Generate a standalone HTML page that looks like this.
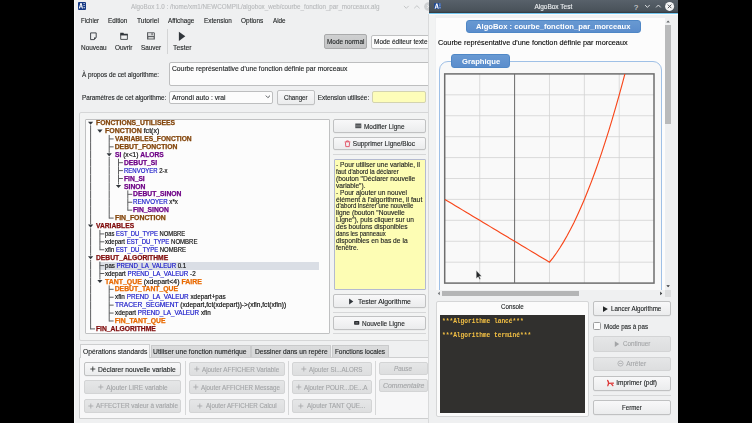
<!DOCTYPE html>
<html><head><meta charset="utf-8"><style>
html,body{margin:0;padding:0;width:752px;height:423px;overflow:hidden;background:#000;position:relative}
div{box-sizing:border-box}
</style></head><body>
<div style="position:absolute;left:74.00px;top:0.00px;width:355.00px;height:423.00px;z-index:0;background:#eff0f1"></div>
<div style="position:absolute;left:74.00px;top:0.00px;width:1.00px;height:423.00px;z-index:0;background:#f8f9f9"></div>
<div style="position:absolute;left:78.40px;top:2.20px;width:7.80px;height:7.80px;z-index:2;background:#163a86;border-radius:1px"><svg width="7.5" height="7.4" viewBox="0 0 75 74" style="position:absolute;left:0;top:0"><path d="M8 66 L24 10 L36 10 L50 66 L40 66 L36 52 L22 52 L18 66 Z M24 44 L34 44 L30 24 Z" fill="#fff"/><rect x="56" y="10" width="10" height="10" fill="#fff"/><rect x="56" y="30" width="10" height="10" fill="#fff"/><rect x="56" y="52" width="12" height="10" fill="#fff"/></svg></div>
<svg style="position:absolute;left:400px;top:2px;z-index:3" width="32" height="10"><path d="M3.9 3.9 L6.3 6.3 L8.7 3.9" stroke="#b9bbbd" fill="none" stroke-width="0.8"/><path d="M14.2 6.3 L16.9 3.7 L19.6 6.3" stroke="#b9bbbd" fill="none" stroke-width="0.8"/><circle cx="28.4" cy="4.5" r="4.3" fill="#cdcfd1"/><path d="M26.8 2.9 L30 6.1 M30 2.9 L26.8 6.1" stroke="#eff0f1" stroke-width="0.8"/></svg>
<svg style="position:absolute;left:85px;top:28px;z-index:3" width="110" height="16" viewBox="85 28 110 16">
<path d="M90.6 32.9 H96.2 V37.6 L94.1 39.6 H90.6 Z" fill="none" stroke="#31363b" stroke-width="0.9"/>
<path d="M94 39.6 L96.2 37.4 H94 Z" fill="#31363b"/>
<path d="M120.7 34.8 H127.4 V39.4 H120.7 Z" fill="none" stroke="#31363b" stroke-width="0.85"/>
<path d="M120.2 32.8 H123.4 L124 33.8 H127.8 V35.2 H120.2 Z" fill="#31363b"/>
<path d="M147 32.2 H154 L154.9 33.1 V39.6 H147 Z" fill="#5d6063"/>
<rect x="148.1" y="33.1" width="5.8" height="2.9" fill="#d8d9da"/>
<rect x="151.6" y="33.1" width="0.9" height="2.1" fill="#3a3d40"/>
<rect x="148.4" y="37.2" width="5.2" height="1.3" fill="#f0f0f0"/>
<path d="M178.9 31.7 L185.3 36.35 L178.9 41 Z" fill="#31363b"/>
</svg>
<div style="position:absolute;left:166.60px;top:28.60px;width:0.80px;height:25.30px;z-index:2;background:#d3d4d5"></div>
<div style="position:absolute;left:323.80px;top:34.20px;width:43.30px;height:14.80px;z-index:2;background:linear-gradient(#cfd0d1,#c3c4c5);border:1px solid #a9aaab;border-radius:2px"></div>
<div style="position:absolute;left:370.50px;top:34.50px;width:61.50px;height:14.20px;z-index:2;background:linear-gradient(#f8f8f9,#ebeced);border:1px solid #c0c1c2;border-radius:2px;box-shadow:0 0.6px 0 rgba(0,0,0,0.06);background:#fcfcfc"></div>
<div style="position:absolute;left:169.40px;top:62.30px;width:261.60px;height:24.00px;z-index:2;background:#fcfcfc;border:1px solid #bdbebf;border-radius:2px"></div>
<div style="position:absolute;left:169.40px;top:91.20px;width:103.80px;height:12.80px;z-index:2;background:#fcfcfc;border:1px solid #bdbebf;border-radius:2px"></div>
<svg style="position:absolute;left:264px;top:94px;z-index:3" width="8" height="6"><path d="M1.8 1.6 L3.9 3.7 L6 1.6" stroke="#31363b" fill="none" stroke-width="0.8"/></svg>
<div style="position:absolute;left:277.20px;top:90.40px;width:37.50px;height:14.20px;z-index:2;background:linear-gradient(#f8f8f9,#ebeced);border:1px solid #c0c1c2;border-radius:2px;box-shadow:0 0.6px 0 rgba(0,0,0,0.06);"></div>
<div style="position:absolute;left:372.40px;top:91.00px;width:53.30px;height:12.40px;z-index:2;background:#fdfdb9;border:1px solid #d3d3b0;border-radius:2px"></div>
<div style="position:absolute;left:79.40px;top:112.20px;width:351.60px;height:229.00px;z-index:1;border:1px solid #d5d6d7;border-radius:2px;background:#f2f3f3"></div>
<div style="position:absolute;left:85.40px;top:119.40px;width:244.70px;height:215.10px;z-index:2;background:#fcfcfc;border:1px solid #c0c1c2;border-radius:1px"></div>
<div style="position:absolute;left:99.20px;top:261.90px;width:219.60px;height:8.00px;z-index:3;background:#dadee5"></div>
<svg style="position:absolute;left:0;top:0;z-index:4" width="752" height="423"><rect x="90.10" y="125.30" width="1" height="1.76" fill="#5f6062"/><path d="M88.00 121.70 L93.20 121.70 L90.60 124.80 Z" fill="#31363b"/><path d="M97.30 129.61 L102.50 129.61 L99.90 132.71 Z" fill="#31363b"/><rect x="90.10" y="127.06" width="1" height="7.92" fill="#5f6062"/><rect x="108.70" y="134.97" width="1" height="7.92" fill="#5f6062"/><rect x="109.20" y="138.43" width="4.4" height="1" fill="#5f6062"/><rect x="90.10" y="134.97" width="1" height="7.92" fill="#5f6062"/><rect x="108.70" y="142.89" width="1" height="7.92" fill="#5f6062"/><rect x="109.20" y="146.34" width="4.4" height="1" fill="#5f6062"/><rect x="90.10" y="142.89" width="1" height="7.92" fill="#5f6062"/><rect x="108.70" y="150.80" width="1" height="1.96" fill="#5f6062"/><rect x="108.70" y="156.96" width="1" height="1.76" fill="#5f6062"/><path d="M106.60 153.36 L111.80 153.36 L109.20 156.46 Z" fill="#31363b"/><rect x="90.10" y="150.80" width="1" height="7.92" fill="#5f6062"/><rect x="118.00" y="158.72" width="1" height="7.92" fill="#5f6062"/><rect x="118.50" y="162.18" width="4.4" height="1" fill="#5f6062"/><rect x="90.10" y="158.72" width="1" height="7.92" fill="#5f6062"/><rect x="108.70" y="158.72" width="1" height="7.92" fill="#5f6062"/><rect x="118.00" y="166.63" width="1" height="7.92" fill="#5f6062"/><rect x="118.50" y="170.09" width="4.4" height="1" fill="#5f6062"/><rect x="90.10" y="166.63" width="1" height="7.92" fill="#5f6062"/><rect x="108.70" y="166.63" width="1" height="7.92" fill="#5f6062"/><rect x="118.00" y="174.55" width="1" height="7.92" fill="#5f6062"/><rect x="118.50" y="178.00" width="4.4" height="1" fill="#5f6062"/><rect x="90.10" y="174.55" width="1" height="7.92" fill="#5f6062"/><rect x="108.70" y="174.55" width="1" height="7.92" fill="#5f6062"/><rect x="118.00" y="182.46" width="1" height="1.96" fill="#5f6062"/><path d="M115.90 185.02 L121.10 185.02 L118.50 188.12 Z" fill="#31363b"/><rect x="90.10" y="182.46" width="1" height="7.92" fill="#5f6062"/><rect x="108.70" y="182.46" width="1" height="7.92" fill="#5f6062"/><rect x="127.30" y="190.38" width="1" height="7.92" fill="#5f6062"/><rect x="127.80" y="193.83" width="4.4" height="1" fill="#5f6062"/><rect x="90.10" y="190.38" width="1" height="7.92" fill="#5f6062"/><rect x="108.70" y="190.38" width="1" height="7.92" fill="#5f6062"/><rect x="127.30" y="198.29" width="1" height="7.92" fill="#5f6062"/><rect x="127.80" y="201.75" width="4.4" height="1" fill="#5f6062"/><rect x="90.10" y="198.29" width="1" height="7.92" fill="#5f6062"/><rect x="108.70" y="198.29" width="1" height="7.92" fill="#5f6062"/><rect x="127.30" y="206.21" width="1" height="4.46" fill="#5f6062"/><rect x="127.80" y="209.66" width="4.4" height="1" fill="#5f6062"/><rect x="90.10" y="206.21" width="1" height="7.92" fill="#5f6062"/><rect x="108.70" y="206.21" width="1" height="7.92" fill="#5f6062"/><rect x="108.70" y="214.12" width="1" height="4.46" fill="#5f6062"/><rect x="109.20" y="217.58" width="4.4" height="1" fill="#5f6062"/><rect x="90.10" y="214.12" width="1" height="7.92" fill="#5f6062"/><rect x="90.10" y="222.04" width="1" height="1.96" fill="#5f6062"/><rect x="90.10" y="228.19" width="1" height="1.76" fill="#5f6062"/><path d="M88.00 224.59 L93.20 224.59 L90.60 227.69 Z" fill="#31363b"/><rect x="99.40" y="229.95" width="1" height="7.92" fill="#5f6062"/><rect x="99.90" y="233.41" width="4.4" height="1" fill="#5f6062"/><rect x="90.10" y="229.95" width="1" height="7.92" fill="#5f6062"/><rect x="99.40" y="237.87" width="1" height="7.92" fill="#5f6062"/><rect x="99.90" y="241.32" width="4.4" height="1" fill="#5f6062"/><rect x="90.10" y="237.87" width="1" height="7.92" fill="#5f6062"/><rect x="99.40" y="245.78" width="1" height="4.46" fill="#5f6062"/><rect x="99.90" y="249.24" width="4.4" height="1" fill="#5f6062"/><rect x="90.10" y="245.78" width="1" height="7.92" fill="#5f6062"/><rect x="90.10" y="253.70" width="1" height="1.96" fill="#5f6062"/><rect x="90.10" y="259.85" width="1" height="1.76" fill="#5f6062"/><path d="M88.00 256.25 L93.20 256.25 L90.60 259.35 Z" fill="#31363b"/><rect x="99.40" y="261.61" width="1" height="7.91" fill="#5f6062"/><rect x="99.90" y="265.07" width="4.4" height="1" fill="#5f6062"/><rect x="90.10" y="261.61" width="1" height="7.91" fill="#5f6062"/><rect x="99.40" y="269.53" width="1" height="7.91" fill="#5f6062"/><rect x="99.90" y="272.99" width="4.4" height="1" fill="#5f6062"/><rect x="90.10" y="269.53" width="1" height="7.91" fill="#5f6062"/><rect x="99.40" y="277.44" width="1" height="1.96" fill="#5f6062"/><path d="M97.30 280.00 L102.50 280.00 L99.90 283.10 Z" fill="#31363b"/><rect x="90.10" y="277.44" width="1" height="7.91" fill="#5f6062"/><rect x="108.70" y="285.36" width="1" height="7.91" fill="#5f6062"/><rect x="109.20" y="288.81" width="4.4" height="1" fill="#5f6062"/><rect x="90.10" y="285.36" width="1" height="7.91" fill="#5f6062"/><rect x="108.70" y="293.27" width="1" height="7.91" fill="#5f6062"/><rect x="109.20" y="296.73" width="4.4" height="1" fill="#5f6062"/><rect x="90.10" y="293.27" width="1" height="7.91" fill="#5f6062"/><rect x="108.70" y="301.19" width="1" height="7.91" fill="#5f6062"/><rect x="109.20" y="304.64" width="4.4" height="1" fill="#5f6062"/><rect x="90.10" y="301.19" width="1" height="7.91" fill="#5f6062"/><rect x="108.70" y="309.10" width="1" height="7.91" fill="#5f6062"/><rect x="109.20" y="312.56" width="4.4" height="1" fill="#5f6062"/><rect x="90.10" y="309.10" width="1" height="7.91" fill="#5f6062"/><rect x="108.70" y="317.02" width="1" height="4.46" fill="#5f6062"/><rect x="109.20" y="320.48" width="4.4" height="1" fill="#5f6062"/><rect x="90.10" y="317.02" width="1" height="7.91" fill="#5f6062"/><rect x="90.10" y="324.93" width="1" height="4.46" fill="#5f6062"/><rect x="90.60" y="328.39" width="4.4" height="1" fill="#5f6062"/></svg>
<div style="position:absolute;left:333.40px;top:119.20px;width:92.60px;height:13.60px;z-index:2;background:linear-gradient(#f8f8f9,#ebeced);border:1px solid #c0c1c2;border-radius:2px;box-shadow:0 0.6px 0 rgba(0,0,0,0.06);"></div>
<svg style="position:absolute;left:354px;top:122px;z-index:3" width="8" height="8"><rect x="1.3" y="1.5" width="6" height="4.7" fill="#505356"/><rect x="1.3" y="3.0" width="6" height="0.45" fill="#9a9c9e"/><rect x="1.3" y="4.6" width="6" height="0.45" fill="#9a9c9e"/></svg>
<div style="position:absolute;left:333.40px;top:136.70px;width:92.60px;height:13.70px;z-index:2;background:linear-gradient(#f8f8f9,#ebeced);border:1px solid #c0c1c2;border-radius:2px;box-shadow:0 0.6px 0 rgba(0,0,0,0.06);"></div>
<svg style="position:absolute;left:344px;top:139px;z-index:3" width="7" height="9"><path d="M0.7 2.9 H6.3 M2.6 2.9 V1.9 H4.4 V2.9 M1.4 3.3 L1.8 7.6 H5.2 L5.6 3.3" stroke="#e0455a" fill="none" stroke-width="0.85"/></svg>
<div style="position:absolute;left:333.40px;top:153.90px;width:92.60px;height:0.80px;z-index:2;background:#d6d7d8"></div>
<div style="position:absolute;left:333.50px;top:158.60px;width:92.40px;height:131.70px;z-index:2;background:#fdfdb4;border:1px solid #b4bad0;border-radius:1px"></div>
<div style="position:absolute;left:333.40px;top:294.20px;width:92.60px;height:14.00px;z-index:2;background:linear-gradient(#f8f8f9,#ebeced);border:1px solid #c0c1c2;border-radius:2px;box-shadow:0 0.6px 0 rgba(0,0,0,0.06);"></div>
<svg style="position:absolute;left:348px;top:297px;z-index:3" width="8" height="9"><path d="M1.1 1.4 L5.3 4.4 L1.1 7.4 Z" fill="#31363b"/></svg>
<div style="position:absolute;left:333.40px;top:311.80px;width:92.60px;height:0.80px;z-index:2;background:#d6d7d8"></div>
<div style="position:absolute;left:333.40px;top:316.30px;width:92.60px;height:13.50px;z-index:2;background:linear-gradient(#f8f8f9,#ebeced);border:1px solid #c0c1c2;border-radius:2px;box-shadow:0 0.6px 0 rgba(0,0,0,0.06);"></div>
<svg style="position:absolute;left:353px;top:320px;z-index:3" width="8" height="7"><rect x="1.1" y="1.1" width="5.2" height="3.6" fill="#2a2d30" rx="0.6"/><rect x="2.4" y="2.2" width="2.6" height="1.3" fill="#6a6d70"/></svg>
<div style="position:absolute;left:333.40px;top:333.20px;width:92.60px;height:0.80px;z-index:2;background:#d6d7d8"></div>
<div style="position:absolute;left:79.40px;top:357.00px;width:351.60px;height:62.10px;z-index:1;background:#f7f7f8;border:1px solid #cdcecf;border-radius:1px"></div>
<div style="position:absolute;left:79.60px;top:344.20px;width:70.70px;height:13.80px;z-index:2;background:#f7f7f8;border:1px solid #cdcecf;border-bottom:none;border-radius:1px 1px 0 0"></div>
<div style="position:absolute;left:150.50px;top:344.60px;width:100.70px;height:12.60px;z-index:2;background:linear-gradient(#dbdcdd,#d5d6d7);border:1px solid #c9cacb;border-bottom:none;border-radius:1px 1px 0 0"></div>
<div style="position:absolute;left:251.40px;top:344.60px;width:80.00px;height:12.60px;z-index:2;background:linear-gradient(#dbdcdd,#d5d6d7);border:1px solid #c9cacb;border-bottom:none;border-radius:1px 1px 0 0"></div>
<div style="position:absolute;left:331.60px;top:344.60px;width:57.40px;height:12.60px;z-index:2;background:linear-gradient(#dbdcdd,#d5d6d7);border:1px solid #c9cacb;border-bottom:none;border-radius:1px 1px 0 0"></div>
<div style="position:absolute;left:83.60px;top:362.20px;width:97.80px;height:13.70px;z-index:2;background:linear-gradient(#f8f8f9,#ebeced);border:1px solid #c0c1c2;border-radius:2px;box-shadow:0 0.6px 0 rgba(0,0,0,0.06);"></div>
<svg style="position:absolute;left:89.80px;top:366.05px;z-index:3" width="6" height="6"><path d="M0.3 3 H5.3 M2.8 0.5 V5.5" stroke="#232627" stroke-width="0.8"/></svg>
<div style="position:absolute;left:83.60px;top:380.30px;width:97.80px;height:13.90px;z-index:2;background:linear-gradient(#e5e6e7,#dddedf);border:1px solid #d3d4d5;border-radius:2px;"></div>
<svg style="position:absolute;left:98.20px;top:384.25px;z-index:3" width="6" height="6"><path d="M0.3 3 H5.3 M2.8 0.5 V5.5" stroke="#a3a5a7" stroke-width="0.8"/></svg>
<div style="position:absolute;left:83.60px;top:398.50px;width:97.80px;height:14.00px;z-index:2;background:linear-gradient(#e5e6e7,#dddedf);border:1px solid #d3d4d5;border-radius:2px;"></div>
<svg style="position:absolute;left:87.60px;top:402.50px;z-index:3" width="6" height="6"><path d="M0.3 3 H5.3 M2.8 0.5 V5.5" stroke="#a3a5a7" stroke-width="0.8"/></svg>
<div style="position:absolute;left:188.90px;top:362.20px;width:95.80px;height:13.70px;z-index:2;background:linear-gradient(#e5e6e7,#dddedf);border:1px solid #d3d4d5;border-radius:2px;"></div>
<svg style="position:absolute;left:193.50px;top:366.05px;z-index:3" width="6" height="6"><path d="M0.3 3 H5.3 M2.8 0.5 V5.5" stroke="#a3a5a7" stroke-width="0.8"/></svg>
<div style="position:absolute;left:188.90px;top:380.30px;width:95.80px;height:13.90px;z-index:2;background:linear-gradient(#e5e6e7,#dddedf);border:1px solid #d3d4d5;border-radius:2px;"></div>
<svg style="position:absolute;left:193.20px;top:384.25px;z-index:3" width="6" height="6"><path d="M0.3 3 H5.3 M2.8 0.5 V5.5" stroke="#a3a5a7" stroke-width="0.8"/></svg>
<div style="position:absolute;left:188.90px;top:398.50px;width:95.80px;height:14.00px;z-index:2;background:linear-gradient(#e5e6e7,#dddedf);border:1px solid #d3d4d5;border-radius:2px;"></div>
<svg style="position:absolute;left:197.10px;top:402.50px;z-index:3" width="6" height="6"><path d="M0.3 3 H5.3 M2.8 0.5 V5.5" stroke="#a3a5a7" stroke-width="0.8"/></svg>
<div style="position:absolute;left:292.00px;top:362.20px;width:79.80px;height:13.70px;z-index:2;background:linear-gradient(#e5e6e7,#dddedf);border:1px solid #d3d4d5;border-radius:2px;"></div>
<svg style="position:absolute;left:300.80px;top:366.05px;z-index:3" width="6" height="6"><path d="M0.3 3 H5.3 M2.8 0.5 V5.5" stroke="#a3a5a7" stroke-width="0.8"/></svg>
<div style="position:absolute;left:292.00px;top:380.30px;width:79.80px;height:13.90px;z-index:2;background:linear-gradient(#e5e6e7,#dddedf);border:1px solid #d3d4d5;border-radius:2px;"></div>
<svg style="position:absolute;left:295.80px;top:384.25px;z-index:3" width="6" height="6"><path d="M0.3 3 H5.3 M2.8 0.5 V5.5" stroke="#a3a5a7" stroke-width="0.8"/></svg>
<div style="position:absolute;left:292.00px;top:398.50px;width:79.80px;height:14.00px;z-index:2;background:linear-gradient(#e5e6e7,#dddedf);border:1px solid #d3d4d5;border-radius:2px;"></div>
<svg style="position:absolute;left:297.80px;top:402.50px;z-index:3" width="6" height="6"><path d="M0.3 3 H5.3 M2.8 0.5 V5.5" stroke="#a3a5a7" stroke-width="0.8"/></svg>
<div style="position:absolute;left:379.40px;top:362.00px;width:48.20px;height:13.00px;z-index:2;background:linear-gradient(#e5e6e7,#dddedf);border:1px solid #d3d4d5;border-radius:2px;"></div>
<div style="position:absolute;left:379.40px;top:379.30px;width:48.20px;height:13.20px;z-index:2;background:linear-gradient(#e5e6e7,#dddedf);border:1px solid #d3d4d5;border-radius:2px;"></div>
<div style="position:absolute;left:185.30px;top:361.40px;width:0.80px;height:53.20px;z-index:2;background:#d6d7d8"></div>
<div style="position:absolute;left:288.20px;top:361.40px;width:0.80px;height:53.20px;z-index:2;background:#d6d7d8"></div>
<div style="position:absolute;left:375.40px;top:361.40px;width:0.80px;height:53.20px;z-index:2;background:#d6d7d8"></div>
<div style="position:absolute;left:428.80px;top:0.00px;width:248.80px;height:423.00px;z-index:10;background:#eff0f1"></div>
<div style="position:absolute;left:428.10px;top:14.00px;width:1.00px;height:409.00px;z-index:10;background:#d9dadb"></div>
<div style="position:absolute;left:429.10px;top:14.00px;width:6.40px;height:409.00px;z-index:10;background:#f2f3f3"></div>
<div style="position:absolute;left:428.80px;top:0.00px;width:248.80px;height:12.80px;z-index:11;background:linear-gradient(#58616a,#49525a 85%,#30363b)"></div>
<div style="position:absolute;left:428.80px;top:12.80px;width:248.80px;height:1.10px;z-index:11;background:#72c6f0"></div>
<div style="position:absolute;left:428.80px;top:13.90px;width:248.80px;height:1.40px;z-index:11;background:#fbfaf9"></div>
<div style="position:absolute;left:433.80px;top:3.20px;width:7.30px;height:6.20px;z-index:12;background:#1f4a94;border-radius:1px"><svg width="7.3" height="6.2" viewBox="0 0 73 62" style="position:absolute;left:0;top:0"><path d="M6 58 L22 6 L34 6 L48 58 L38 58 L34 46 L20 46 L16 58 Z M22 38 L32 38 L28 20 Z" fill="#fff"/><rect x="54" y="6" width="10" height="9" fill="#fff"/><rect x="54" y="24" width="10" height="9" fill="#fff"/><rect x="54" y="44" width="12" height="9" fill="#fff"/></svg></div>
<svg style="position:absolute;left:620px;top:0px;z-index:12" width="58" height="13">
<text x="14" y="9.6" font-family="Liberation Sans" font-size="7.4" fill="#e8eaec">?</text>
<path d="M25.1 5 L27.4 7.4 L29.7 5" stroke="#e8eaec" fill="none" stroke-width="0.9"/>
<path d="M36.1 7.4 L38.4 5 L40.7 7.4" stroke="#e8eaec" fill="none" stroke-width="0.9"/>
<circle cx="49.6" cy="6.4" r="4.5" fill="#f4f5f6"/>
<path d="M47.8 4.6 L51.4 8.2 M51.4 4.6 L47.8 8.2" stroke="#3f4449" stroke-width="0.9"/>
</svg>
<div style="position:absolute;left:435.50px;top:17.60px;width:229.30px;height:272.40px;z-index:11;background:#fcfcfc"></div>
<div style="position:absolute;left:466.00px;top:20.10px;width:174.70px;height:13.10px;z-index:12;background:linear-gradient(#6899d2,#5b8dcc);border:0.7px solid #4f87c6;border-radius:3px"></div>
<div style="position:absolute;left:438.80px;top:61.20px;width:222.80px;height:268.80px;z-index:12;border:1px solid #9fc0e6;border-radius:9px;background:#f8f8f8"></div>
<div style="position:absolute;left:451.20px;top:54.10px;width:58.40px;height:14.00px;z-index:13;background:linear-gradient(#6899d2,#5b8dcc);border:0.7px solid #4f87c6;border-radius:3px"></div>
<svg style="position:absolute;left:0;top:0;z-index:13" width="752" height="423"><rect x="444.7" y="73.9" width="209.3" height="209.2" fill="#f9f9f9"/><line x1="479.72" y1="73.9" x2="479.72" y2="283" stroke="#d3d3d3" stroke-width="0.8"/><line x1="549.48" y1="73.9" x2="549.48" y2="283" stroke="#d3d3d3" stroke-width="0.8"/><line x1="584.36" y1="73.9" x2="584.36" y2="283" stroke="#d3d3d3" stroke-width="0.8"/><line x1="619.24" y1="73.9" x2="619.24" y2="283" stroke="#d3d3d3" stroke-width="0.8"/><line x1="444.7" y1="262.18" x2="654" y2="262.18" stroke="#d3d3d3" stroke-width="0.8"/><line x1="444.7" y1="241.26" x2="654" y2="241.26" stroke="#d3d3d3" stroke-width="0.8"/><line x1="444.7" y1="220.34" x2="654" y2="220.34" stroke="#d3d3d3" stroke-width="0.8"/><line x1="444.7" y1="199.42" x2="654" y2="199.42" stroke="#d3d3d3" stroke-width="0.8"/><line x1="444.7" y1="178.50" x2="654" y2="178.50" stroke="#d3d3d3" stroke-width="0.8"/><line x1="444.7" y1="157.58" x2="654" y2="157.58" stroke="#d3d3d3" stroke-width="0.8"/><line x1="444.7" y1="136.66" x2="654" y2="136.66" stroke="#d3d3d3" stroke-width="0.8"/><line x1="444.7" y1="115.74" x2="654" y2="115.74" stroke="#d3d3d3" stroke-width="0.8"/><line x1="444.7" y1="94.82" x2="654" y2="94.82" stroke="#d3d3d3" stroke-width="0.8"/><line x1="514.60" y1="73.9" x2="514.60" y2="283" stroke="#5a5a5a" stroke-width="0.9"/><rect x="444.7" y="73.9" width="209.3" height="209.2" fill="none" stroke="#6e6e6e" stroke-width="1.5"/><clipPath id="cp"><rect x="444.7" y="73.9" width="209.3" height="209.2"/></clipPath><polyline points="444.84,199.42 448.33,201.51 451.82,203.60 455.30,205.70 458.79,207.79 462.28,209.88 465.77,211.97 469.26,214.06 472.74,216.16 476.23,218.25 479.72,220.34 483.21,222.43 486.70,224.52 490.18,226.62 493.67,228.71 497.16,230.80 500.65,232.89 504.14,234.98 507.62,237.08 511.11,239.17 514.60,241.26 518.09,243.35 521.58,245.44 525.06,247.54 528.55,249.63 532.04,251.72 535.53,253.81 539.02,255.90 542.50,258.00 545.99,260.09 549.48,262.18 552.97,257.79 556.46,252.98 559.94,247.75 563.43,242.10 566.92,236.03 570.41,229.54 573.90,222.64 577.38,215.32 580.87,207.58 584.36,199.42 587.85,190.84 591.34,181.85 594.82,172.43 598.31,162.60 601.80,152.35 605.29,141.68 608.78,130.59 612.26,119.09 615.75,107.16 619.24,94.82 622.73,82.06 626.22,68.88 629.70,55.28 633.19,41.26 636.68,26.83 640.17,11.98 643.66,-3.29 647.14,-18.98 650.63,-35.09 654.12,-51.62" fill="none" stroke="#f8461a" stroke-width="1.15" clip-path="url(#cp)"/><path d="M476.3 270.6 L476.3 278.6 L478.2 276.8 L479.6 279.6 L480.6 279.1 L479.3 276.3 L481.6 276.2 Z" fill="#232627" stroke="#f0f0f0" stroke-width="0.3"/></svg>
<div style="position:absolute;left:664.80px;top:17.60px;width:6.50px;height:272.40px;z-index:15;background:#eff0f1"></div>
<div style="position:absolute;left:665.40px;top:25.00px;width:5.20px;height:98.70px;z-index:16;background:#b9babb"></div>
<svg style="position:absolute;left:664px;top:18px;z-index:16" width="8" height="6"><path d="M2.3 4.4 L4.1 2.4 L5.9 4.4 Z" fill="#606366"/></svg>
<svg style="position:absolute;left:664px;top:283px;z-index:16" width="8" height="6"><path d="M2.3 2.2 L4.1 4.2 L5.9 2.2 Z" fill="#303336"/></svg>
<div style="position:absolute;left:428.80px;top:290.00px;width:248.80px;height:133.00px;z-index:15;background:#eff0f1"></div>
<div style="position:absolute;left:442.00px;top:291.00px;width:136.60px;height:5.00px;z-index:16;background:#b4b5b6"></div>
<svg style="position:absolute;left:435px;top:290px;z-index:16" width="8" height="7"><path d="M4.8 1.6 L2.8 3.4 L4.8 5.2 Z" fill="#707376"/></svg>
<svg style="position:absolute;left:658px;top:290px;z-index:16" width="8" height="7"><path d="M2.2 1.6 L4.2 3.4 L2.2 5.2 Z" fill="#303336"/></svg>
<div style="position:absolute;left:664.80px;top:290.00px;width:6.50px;height:6.60px;z-index:16;background:#dcddde"></div>
<div style="position:absolute;left:436.30px;top:300.50px;width:153.20px;height:116.70px;z-index:16;background:#fbfbfb;border:1px solid #d5d6d7;border-radius:2px"></div>
<div style="position:absolute;left:440.00px;top:314.70px;width:145.00px;height:97.90px;z-index:17;background:#31302e"></div>
<div style="position:absolute;left:593.20px;top:301.10px;width:78.00px;height:15.10px;z-index:16;background:linear-gradient(#f8f8f9,#ebeced);border:1px solid #c0c1c2;border-radius:2px;box-shadow:0 0.6px 0 rgba(0,0,0,0.06);"></div>
<svg style="position:absolute;left:602px;top:305px;z-index:17" width="8" height="8"><path d="M1 1.2 L5.9 4.1 L1 7 Z" fill="#232627"/></svg>
<div style="position:absolute;left:593.10px;top:322.40px;width:7.50px;height:7.60px;z-index:16;background:#fcfcfc;border:1px solid #9c9d9e;border-radius:1.5px"></div>
<div style="position:absolute;left:593.20px;top:336.30px;width:78.00px;height:15.40px;z-index:16;background:linear-gradient(#e5e6e7,#dddedf);border:1px solid #d3d4d5;border-radius:2px;"></div>
<svg style="position:absolute;left:614px;top:340px;z-index:17" width="6" height="8"><path d="M0.8 1.2 L5.2 4.1 L0.8 7 Z" fill="#a3a5a7"/></svg>
<div style="position:absolute;left:593.20px;top:356.60px;width:78.00px;height:14.10px;z-index:16;background:linear-gradient(#e5e6e7,#dddedf);border:1px solid #d3d4d5;border-radius:2px;"></div>
<svg style="position:absolute;left:617px;top:360px;z-index:17" width="7" height="7"><circle cx="3.5" cy="3.5" r="2.6" fill="none" stroke="#a3a5a7" stroke-width="0.7"/><path d="M2 3.5 H5" stroke="#a3a5a7" stroke-width="0.7"/></svg>
<div style="position:absolute;left:593.20px;top:375.50px;width:78.00px;height:15.00px;z-index:16;background:linear-gradient(#f8f8f9,#ebeced);border:1px solid #c0c1c2;border-radius:2px;box-shadow:0 0.6px 0 rgba(0,0,0,0.06);"></div>
<svg style="position:absolute;left:606px;top:379px;z-index:17" width="9" height="9"><path d="M1.6 1.4 Q3.4 3.6 1.8 6.8 M2.6 4.3 L7.4 4.2 M5 4.3 L6.9 6.6" stroke="#dc3636" fill="none" stroke-width="1.25" stroke-linecap="round"/></svg>
<div style="position:absolute;left:592.60px;top:395.30px;width:78.40px;height:0.80px;z-index:16;background:#d6d7d8"></div>
<div style="position:absolute;left:593.20px;top:400.30px;width:78.00px;height:14.90px;z-index:16;background:linear-gradient(#f8f8f9,#ebeced);border:1px solid #c0c1c2;border-radius:2px;box-shadow:0 0.6px 0 rgba(0,0,0,0.06);"></div>
<div id="t0" style="position:absolute;left:131.20px;top:7.22px;font-family:'Liberation Sans';font-size:6.3px;font-weight:400;color:#b8babc;white-space:pre;line-height:0;filter:contrast(1.001);z-index:5;-webkit-text-stroke:0.12px #b8babc;transform:scaleX(0.9925);transform-origin:0 0;">AlgoBox 1.0 : /home/xm1/NEWCOMPIL/algobox_web/courbe_fonction_par_morceaux.alg</div>
<div id="t1" style="position:absolute;left:80.60px;top:20.58px;font-family:'Liberation Sans';font-size:6.7px;font-weight:400;color:#232627;white-space:pre;line-height:0;filter:contrast(1.001);z-index:5;-webkit-text-stroke:0.12px #232627;transform:scaleX(0.9015);transform-origin:0 0;">Fichier</div>
<div id="t2" style="position:absolute;left:107.70px;top:20.58px;font-family:'Liberation Sans';font-size:6.7px;font-weight:400;color:#232627;white-space:pre;line-height:0;filter:contrast(1.001);z-index:5;-webkit-text-stroke:0.12px #232627;transform:scaleX(0.9485);transform-origin:0 0;">Edition</div>
<div id="t3" style="position:absolute;left:136.50px;top:20.58px;font-family:'Liberation Sans';font-size:6.7px;font-weight:400;color:#232627;white-space:pre;line-height:0;filter:contrast(1.001);z-index:5;-webkit-text-stroke:0.12px #232627;transform:scaleX(0.9926);transform-origin:0 0;">Tutoriel</div>
<div id="t4" style="position:absolute;left:168.00px;top:20.58px;font-family:'Liberation Sans';font-size:6.7px;font-weight:400;color:#232627;white-space:pre;line-height:0;filter:contrast(1.001);z-index:5;-webkit-text-stroke:0.12px #232627;transform:scaleX(0.9472);transform-origin:0 0;">Affichage</div>
<div id="t5" style="position:absolute;left:203.90px;top:20.58px;font-family:'Liberation Sans';font-size:6.7px;font-weight:400;color:#232627;white-space:pre;line-height:0;filter:contrast(1.001);z-index:5;-webkit-text-stroke:0.12px #232627;transform:scaleX(0.9498);transform-origin:0 0;">Extension</div>
<div id="t6" style="position:absolute;left:240.90px;top:20.58px;font-family:'Liberation Sans';font-size:6.7px;font-weight:400;color:#232627;white-space:pre;line-height:0;filter:contrast(1.001);z-index:5;-webkit-text-stroke:0.12px #232627;transform:scaleX(0.9669);transform-origin:0 0;">Options</div>
<div id="t7" style="position:absolute;left:272.60px;top:20.58px;font-family:'Liberation Sans';font-size:6.7px;font-weight:400;color:#232627;white-space:pre;line-height:0;filter:contrast(1.001);z-index:5;-webkit-text-stroke:0.12px #232627;transform:scaleX(0.9410);transform-origin:0 0;">Aide</div>
<div id="t8" style="position:absolute;left:80.60px;top:48.15px;font-family:'Liberation Sans';font-size:6.5px;font-weight:400;color:#232627;white-space:pre;line-height:0;filter:contrast(1.001);z-index:5;-webkit-text-stroke:0.12px #232627;transform:scaleX(0.9873);transform-origin:0 0;">Nouveau</div>
<div id="t9" style="position:absolute;left:115.00px;top:48.15px;font-family:'Liberation Sans';font-size:6.5px;font-weight:400;color:#232627;white-space:pre;line-height:0;filter:contrast(1.001);z-index:5;-webkit-text-stroke:0.12px #232627;transform:scaleX(0.9885);transform-origin:0 0;">Ouvrir</div>
<div id="t10" style="position:absolute;left:140.80px;top:48.15px;font-family:'Liberation Sans';font-size:6.5px;font-weight:400;color:#232627;white-space:pre;line-height:0;filter:contrast(1.001);z-index:5;-webkit-text-stroke:0.12px #232627;transform:scaleX(0.9801);transform-origin:0 0;">Sauver</div>
<div id="t11" style="position:absolute;left:173.30px;top:48.15px;font-family:'Liberation Sans';font-size:6.5px;font-weight:400;color:#232627;white-space:pre;line-height:0;filter:contrast(1.001);z-index:5;-webkit-text-stroke:0.12px #232627;transform:scaleX(1.0507);transform-origin:0 0;">Tester</div>
<div id="t12" style="position:absolute;left:326.90px;top:42.35px;font-family:'Liberation Sans';font-size:6.5px;font-weight:400;color:#232627;white-space:pre;line-height:0;filter:contrast(1.001);z-index:5;-webkit-text-stroke:0.12px #232627;transform:scaleX(0.9858);transform-origin:0 0;">Mode normal</div>
<div id="t13" style="position:absolute;left:373.80px;top:42.35px;font-family:'Liberation Sans';font-size:6.5px;font-weight:400;color:#232627;white-space:pre;line-height:0;filter:contrast(1.001);z-index:5;-webkit-text-stroke:0.12px #232627;transform:scaleX(0.9936);transform-origin:0 0;">Mode éditeur texte</div>
<div id="t14" style="position:absolute;left:82.00px;top:74.72px;font-family:'Liberation Sans';font-size:6.3px;font-weight:400;color:#232627;white-space:pre;line-height:0;filter:contrast(1.001);z-index:5;-webkit-text-stroke:0.12px #232627;">À propos de cet algorithme:</div>
<div id="t15" style="position:absolute;left:172.20px;top:68.51px;font-family:'Liberation Sans';font-size:6.6px;font-weight:400;color:#232627;white-space:pre;line-height:0;filter:contrast(1.001);z-index:5;-webkit-text-stroke:0.12px #232627;transform:scaleX(1.0231);transform-origin:0 0;">Courbe représentative d'une fonction définie par morceaux</div>
<div id="t16" style="position:absolute;left:82.00px;top:97.62px;font-family:'Liberation Sans';font-size:6.3px;font-weight:400;color:#232627;white-space:pre;line-height:0;filter:contrast(1.001);z-index:5;-webkit-text-stroke:0.12px #232627;">Paramètres de cet algorithme:</div>
<div id="t17" style="position:absolute;left:172.40px;top:97.71px;font-family:'Liberation Sans';font-size:6.6px;font-weight:400;color:#232627;white-space:pre;line-height:0;filter:contrast(1.001);z-index:5;-webkit-text-stroke:0.12px #232627;transform:scaleX(1.0298);transform-origin:0 0;">Arrondi auto : vrai</div>
<div id="t18" style="position:absolute;left:284.00px;top:97.85px;font-family:'Liberation Sans';font-size:6.5px;font-weight:400;color:#232627;white-space:pre;line-height:0;filter:contrast(1.001);z-index:5;-webkit-text-stroke:0.12px #232627;transform:scaleX(0.9424);transform-origin:0 0;">Changer</div>
<div id="t19" style="position:absolute;left:317.70px;top:97.58px;font-family:'Liberation Sans';font-size:6.4px;font-weight:400;color:#232627;white-space:pre;line-height:0;filter:contrast(1.001);z-index:5;-webkit-text-stroke:0.12px #232627;">Extension utilisée:</div>
<div id="t20" style="position:absolute;left:96.10px;top:123.24px;font-family:'Liberation Sans';font-size:6.8px;font-weight:400;color:#232627;white-space:pre;line-height:0;filter:contrast(1.001);z-index:6;"><span style="color:#82440a;font-weight:700;-webkit-text-stroke:0.25px #82440a;">FONCTIONS_UTILISEES</span></div>
<div id="t21" style="position:absolute;left:105.40px;top:131.16px;font-family:'Liberation Sans';font-size:6.8px;font-weight:400;color:#232627;white-space:pre;line-height:0;filter:contrast(1.001);z-index:6;transform:scaleX(1.0343);transform-origin:0 0;"><span style="color:#82440a;font-weight:700;-webkit-text-stroke:0.25px #82440a;">FONCTION</span><span style="color:#111111;font-weight:400;-webkit-text-stroke:0.18px #111111;"> fct(x)</span></div>
<div id="t22" style="position:absolute;left:114.70px;top:139.07px;font-family:'Liberation Sans';font-size:6.8px;font-weight:400;color:#232627;white-space:pre;line-height:0;filter:contrast(1.001);z-index:6;transform:scaleX(0.9827);transform-origin:0 0;"><span style="color:#82440a;font-weight:700;-webkit-text-stroke:0.25px #82440a;">VARIABLES_FONCTION</span></div>
<div id="t23" style="position:absolute;left:114.70px;top:146.99px;font-family:'Liberation Sans';font-size:6.8px;font-weight:400;color:#232627;white-space:pre;line-height:0;filter:contrast(1.001);z-index:6;"><span style="color:#82440a;font-weight:700;-webkit-text-stroke:0.25px #82440a;">DEBUT_FONCTION</span></div>
<div id="t24" style="position:absolute;left:114.70px;top:154.90px;font-family:'Liberation Sans';font-size:6.8px;font-weight:400;color:#232627;white-space:pre;line-height:0;filter:contrast(1.001);z-index:6;transform:scaleX(0.9804);transform-origin:0 0;"><span style="color:#6e0086;font-weight:700;-webkit-text-stroke:0.25px #6e0086;">SI</span><span style="color:#111111;font-weight:400;-webkit-text-stroke:0.18px #111111;"> (x&lt;1) </span><span style="color:#6e0086;font-weight:700;-webkit-text-stroke:0.25px #6e0086;">ALORS</span></div>
<div id="t25" style="position:absolute;left:124.00px;top:162.82px;font-family:'Liberation Sans';font-size:6.8px;font-weight:400;color:#232627;white-space:pre;line-height:0;filter:contrast(1.001);z-index:6;transform:scaleX(0.9874);transform-origin:0 0;"><span style="color:#6e0086;font-weight:700;-webkit-text-stroke:0.25px #6e0086;">DEBUT_SI</span></div>
<div id="t26" style="position:absolute;left:124.00px;top:170.73px;font-family:'Liberation Sans';font-size:6.8px;font-weight:400;color:#232627;white-space:pre;line-height:0;filter:contrast(1.001);z-index:6;transform:scaleX(0.8808);transform-origin:0 0;"><span style="color:#1414c8;font-weight:400;-webkit-text-stroke:0.18px #1414c8;">RENVOYER</span><span style="color:#111111;font-weight:400;-webkit-text-stroke:0.18px #111111;"> 2-x</span></div>
<div id="t27" style="position:absolute;left:124.00px;top:178.65px;font-family:'Liberation Sans';font-size:6.8px;font-weight:400;color:#232627;white-space:pre;line-height:0;filter:contrast(1.001);z-index:6;transform:scaleX(0.9784);transform-origin:0 0;"><span style="color:#6e0086;font-weight:700;-webkit-text-stroke:0.25px #6e0086;">FIN_SI</span></div>
<div id="t28" style="position:absolute;left:124.00px;top:186.56px;font-family:'Liberation Sans';font-size:6.8px;font-weight:400;color:#232627;white-space:pre;line-height:0;filter:contrast(1.001);z-index:6;transform:scaleX(0.9939);transform-origin:0 0;"><span style="color:#6e0086;font-weight:700;-webkit-text-stroke:0.25px #6e0086;">SINON</span></div>
<div id="t29" style="position:absolute;left:133.30px;top:194.48px;font-family:'Liberation Sans';font-size:6.8px;font-weight:400;color:#232627;white-space:pre;line-height:0;filter:contrast(1.001);z-index:6;transform:scaleX(0.9935);transform-origin:0 0;"><span style="color:#6e0086;font-weight:700;-webkit-text-stroke:0.25px #6e0086;">DEBUT_SINON</span></div>
<div id="t30" style="position:absolute;left:133.30px;top:202.39px;font-family:'Liberation Sans';font-size:6.8px;font-weight:400;color:#232627;white-space:pre;line-height:0;filter:contrast(1.001);z-index:6;transform:scaleX(0.9071);transform-origin:0 0;"><span style="color:#1414c8;font-weight:400;-webkit-text-stroke:0.18px #1414c8;">RENVOYER</span><span style="color:#111111;font-weight:400;-webkit-text-stroke:0.18px #111111;"> x*x</span></div>
<div id="t31" style="position:absolute;left:133.30px;top:210.31px;font-family:'Liberation Sans';font-size:6.8px;font-weight:400;color:#232627;white-space:pre;line-height:0;filter:contrast(1.001);z-index:6;transform:scaleX(0.9899);transform-origin:0 0;"><span style="color:#6e0086;font-weight:700;-webkit-text-stroke:0.25px #6e0086;">FIN_SINON</span></div>
<div id="t32" style="position:absolute;left:114.70px;top:218.22px;font-family:'Liberation Sans';font-size:6.8px;font-weight:400;color:#232627;white-space:pre;line-height:0;filter:contrast(1.001);z-index:6;transform:scaleX(1.0113);transform-origin:0 0;"><span style="color:#82440a;font-weight:700;-webkit-text-stroke:0.25px #82440a;">FIN_FONCTION</span></div>
<div id="t33" style="position:absolute;left:96.10px;top:226.14px;font-family:'Liberation Sans';font-size:6.8px;font-weight:400;color:#232627;white-space:pre;line-height:0;filter:contrast(1.001);z-index:6;transform:scaleX(0.9824);transform-origin:0 0;"><span style="color:#7f0a0a;font-weight:700;-webkit-text-stroke:0.25px #7f0a0a;">VARIABLES</span></div>
<div id="t34" style="position:absolute;left:105.40px;top:234.05px;font-family:'Liberation Sans';font-size:6.8px;font-weight:400;color:#232627;white-space:pre;line-height:0;filter:contrast(1.001);z-index:6;transform:scaleX(0.8628);transform-origin:0 0;"><span style="color:#111111;font-weight:400;-webkit-text-stroke:0.18px #111111;">pas </span><span style="color:#1414c8;font-weight:400;-webkit-text-stroke:0.18px #1414c8;">EST_DU_TYPE</span><span style="color:#111111;font-weight:400;-webkit-text-stroke:0.18px #111111;"> NOMBRE</span></div>
<div id="t35" style="position:absolute;left:105.40px;top:241.97px;font-family:'Liberation Sans';font-size:6.8px;font-weight:400;color:#232627;white-space:pre;line-height:0;filter:contrast(1.001);z-index:6;transform:scaleX(0.8829);transform-origin:0 0;"><span style="color:#111111;font-weight:400;-webkit-text-stroke:0.18px #111111;">xdepart </span><span style="color:#1414c8;font-weight:400;-webkit-text-stroke:0.18px #1414c8;">EST_DU_TYPE</span><span style="color:#111111;font-weight:400;-webkit-text-stroke:0.18px #111111;"> NOMBRE</span></div>
<div id="t36" style="position:absolute;left:105.40px;top:249.88px;font-family:'Liberation Sans';font-size:6.8px;font-weight:400;color:#232627;white-space:pre;line-height:0;filter:contrast(1.001);z-index:6;transform:scaleX(0.8740);transform-origin:0 0;"><span style="color:#111111;font-weight:400;-webkit-text-stroke:0.18px #111111;">xfin </span><span style="color:#1414c8;font-weight:400;-webkit-text-stroke:0.18px #1414c8;">EST_DU_TYPE</span><span style="color:#111111;font-weight:400;-webkit-text-stroke:0.18px #111111;"> NOMBRE</span></div>
<div id="t37" style="position:absolute;left:96.10px;top:257.80px;font-family:'Liberation Sans';font-size:6.8px;font-weight:400;color:#232627;white-space:pre;line-height:0;filter:contrast(1.001);z-index:6;transform:scaleX(0.9905);transform-origin:0 0;"><span style="color:#7f0a0a;font-weight:700;-webkit-text-stroke:0.25px #7f0a0a;">DEBUT_ALGORITHME</span></div>
<div id="t38" style="position:absolute;left:105.40px;top:265.71px;font-family:'Liberation Sans';font-size:6.8px;font-weight:400;color:#232627;white-space:pre;line-height:0;filter:contrast(1.001);z-index:6;transform:scaleX(0.8966);transform-origin:0 0;"><span style="color:#111111;font-weight:400;-webkit-text-stroke:0.18px #111111;">pas </span><span style="color:#1414c8;font-weight:400;-webkit-text-stroke:0.18px #1414c8;">PREND_LA_VALEUR</span><span style="color:#111111;font-weight:400;-webkit-text-stroke:0.18px #111111;"> 0.1</span></div>
<div id="t39" style="position:absolute;left:105.40px;top:273.63px;font-family:'Liberation Sans';font-size:6.8px;font-weight:400;color:#232627;white-space:pre;line-height:0;filter:contrast(1.001);z-index:6;transform:scaleX(0.9165);transform-origin:0 0;"><span style="color:#111111;font-weight:400;-webkit-text-stroke:0.18px #111111;">xdepart </span><span style="color:#1414c8;font-weight:400;-webkit-text-stroke:0.18px #1414c8;">PREND_LA_VALEUR</span><span style="color:#111111;font-weight:400;-webkit-text-stroke:0.18px #111111;"> -2</span></div>
<div id="t40" style="position:absolute;left:105.40px;top:281.54px;font-family:'Liberation Sans';font-size:6.8px;font-weight:400;color:#232627;white-space:pre;line-height:0;filter:contrast(1.001);z-index:6;transform:scaleX(1.0203);transform-origin:0 0;"><span style="color:#e86a00;font-weight:700;-webkit-text-stroke:0.25px #e86a00;">TANT_QUE</span><span style="color:#111111;font-weight:400;-webkit-text-stroke:0.18px #111111;"> (xdepart&lt;4) </span><span style="color:#e86a00;font-weight:700;-webkit-text-stroke:0.25px #e86a00;">FAIRE</span></div>
<div id="t41" style="position:absolute;left:114.70px;top:289.46px;font-family:'Liberation Sans';font-size:6.8px;font-weight:400;color:#232627;white-space:pre;line-height:0;filter:contrast(1.001);z-index:6;"><span style="color:#e86a00;font-weight:700;-webkit-text-stroke:0.25px #e86a00;">DEBUT_TANT_QUE</span></div>
<div id="t42" style="position:absolute;left:114.70px;top:297.37px;font-family:'Liberation Sans';font-size:6.8px;font-weight:400;color:#232627;white-space:pre;line-height:0;filter:contrast(1.001);z-index:6;transform:scaleX(0.9347);transform-origin:0 0;"><span style="color:#111111;font-weight:400;-webkit-text-stroke:0.18px #111111;">xfin </span><span style="color:#1414c8;font-weight:400;-webkit-text-stroke:0.18px #1414c8;">PREND_LA_VALEUR</span><span style="color:#111111;font-weight:400;-webkit-text-stroke:0.18px #111111;"> xdepart+pas</span></div>
<div id="t43" style="position:absolute;left:114.70px;top:305.29px;font-family:'Liberation Sans';font-size:6.8px;font-weight:400;color:#232627;white-space:pre;line-height:0;filter:contrast(1.001);z-index:6;transform:scaleX(0.9717);transform-origin:0 0;"><span style="color:#1414c8;font-weight:400;-webkit-text-stroke:0.18px #1414c8;">TRACER_SEGMENT</span><span style="color:#111111;font-weight:400;-webkit-text-stroke:0.18px #111111;"> (xdepart,fct(xdepart))-&gt;(xfin,fct(xfin))</span></div>
<div id="t44" style="position:absolute;left:114.70px;top:313.20px;font-family:'Liberation Sans';font-size:6.8px;font-weight:400;color:#232627;white-space:pre;line-height:0;filter:contrast(1.001);z-index:6;transform:scaleX(0.9256);transform-origin:0 0;"><span style="color:#111111;font-weight:400;-webkit-text-stroke:0.18px #111111;">xdepart </span><span style="color:#1414c8;font-weight:400;-webkit-text-stroke:0.18px #1414c8;">PREND_LA_VALEUR</span><span style="color:#111111;font-weight:400;-webkit-text-stroke:0.18px #111111;"> xfin</span></div>
<div id="t45" style="position:absolute;left:114.70px;top:321.12px;font-family:'Liberation Sans';font-size:6.8px;font-weight:400;color:#232627;white-space:pre;line-height:0;filter:contrast(1.001);z-index:6;"><span style="color:#e86a00;font-weight:700;-webkit-text-stroke:0.25px #e86a00;">FIN_TANT_QUE</span></div>
<div id="t46" style="position:absolute;left:96.10px;top:329.03px;font-family:'Liberation Sans';font-size:6.8px;font-weight:400;color:#232627;white-space:pre;line-height:0;filter:contrast(1.001);z-index:6;transform:scaleX(0.9897);transform-origin:0 0;"><span style="color:#7f0a0a;font-weight:700;-webkit-text-stroke:0.25px #7f0a0a;">FIN_ALGORITHME</span></div>
<div id="t47" style="position:absolute;left:363.80px;top:126.75px;font-family:'Liberation Sans';font-size:6.5px;font-weight:400;color:#232627;white-space:pre;line-height:0;filter:contrast(1.001);z-index:5;-webkit-text-stroke:0.12px #232627;transform:scaleX(0.9920);transform-origin:0 0;">Modifier Ligne</div>
<div id="t48" style="position:absolute;left:352.80px;top:144.45px;font-family:'Liberation Sans';font-size:6.5px;font-weight:400;color:#232627;white-space:pre;line-height:0;filter:contrast(1.001);z-index:5;-webkit-text-stroke:0.12px #232627;">Supprimer Ligne/Bloc</div>
<div id="t49" style="position:absolute;left:336.00px;top:165.11px;font-family:'Liberation Sans';font-size:6.6px;font-weight:400;color:#1b1d1e;white-space:pre;line-height:0;filter:contrast(1.001);z-index:5;-webkit-text-stroke:0.12px #1b1d1e;transform:scaleX(1.0084);transform-origin:0 0;">- Pour utiliser une variable, il</div>
<div id="t50" style="position:absolute;left:336.00px;top:172.00px;font-family:'Liberation Sans';font-size:6.6px;font-weight:400;color:#1b1d1e;white-space:pre;line-height:0;filter:contrast(1.001);z-index:5;-webkit-text-stroke:0.12px #1b1d1e;transform:scaleX(0.9323);transform-origin:0 0;">faut d'abord la déclarer</div>
<div id="t51" style="position:absolute;left:336.00px;top:178.89px;font-family:'Liberation Sans';font-size:6.6px;font-weight:400;color:#1b1d1e;white-space:pre;line-height:0;filter:contrast(1.001);z-index:5;-webkit-text-stroke:0.12px #1b1d1e;transform:scaleX(1.0172);transform-origin:0 0;">(bouton &quot;Déclarer nouvelle</div>
<div id="t52" style="position:absolute;left:336.00px;top:185.78px;font-family:'Liberation Sans';font-size:6.6px;font-weight:400;color:#1b1d1e;white-space:pre;line-height:0;filter:contrast(1.001);z-index:5;-webkit-text-stroke:0.12px #1b1d1e;">variable&quot;).</div>
<div id="t53" style="position:absolute;left:336.00px;top:192.67px;font-family:'Liberation Sans';font-size:6.6px;font-weight:400;color:#1b1d1e;white-space:pre;line-height:0;filter:contrast(1.001);z-index:5;-webkit-text-stroke:0.12px #1b1d1e;transform:scaleX(1.0072);transform-origin:0 0;">- Pour ajouter un nouvel</div>
<div id="t54" style="position:absolute;left:336.00px;top:199.56px;font-family:'Liberation Sans';font-size:6.6px;font-weight:400;color:#1b1d1e;white-space:pre;line-height:0;filter:contrast(1.001);z-index:5;-webkit-text-stroke:0.12px #1b1d1e;transform:scaleX(1.0306);transform-origin:0 0;">élément à l'algorithme, il faut</div>
<div id="t55" style="position:absolute;left:336.00px;top:206.45px;font-family:'Liberation Sans';font-size:6.6px;font-weight:400;color:#1b1d1e;white-space:pre;line-height:0;filter:contrast(1.001);z-index:5;-webkit-text-stroke:0.12px #1b1d1e;transform:scaleX(0.9312);transform-origin:0 0;">d'abord insérer une nouvelle</div>
<div id="t56" style="position:absolute;left:336.00px;top:213.34px;font-family:'Liberation Sans';font-size:6.6px;font-weight:400;color:#1b1d1e;white-space:pre;line-height:0;filter:contrast(1.001);z-index:5;-webkit-text-stroke:0.12px #1b1d1e;transform:scaleX(1.0093);transform-origin:0 0;">ligne (bouton &quot;Nouvelle</div>
<div id="t57" style="position:absolute;left:336.00px;top:220.23px;font-family:'Liberation Sans';font-size:6.6px;font-weight:400;color:#1b1d1e;white-space:pre;line-height:0;filter:contrast(1.001);z-index:5;-webkit-text-stroke:0.12px #1b1d1e;">Ligne&quot;), puis cliquer sur un</div>
<div id="t58" style="position:absolute;left:336.00px;top:227.12px;font-family:'Liberation Sans';font-size:6.6px;font-weight:400;color:#1b1d1e;white-space:pre;line-height:0;filter:contrast(1.001);z-index:5;-webkit-text-stroke:0.12px #1b1d1e;transform:scaleX(1.0118);transform-origin:0 0;">des boutons disponibles</div>
<div id="t59" style="position:absolute;left:336.00px;top:234.01px;font-family:'Liberation Sans';font-size:6.6px;font-weight:400;color:#1b1d1e;white-space:pre;line-height:0;filter:contrast(1.001);z-index:5;-webkit-text-stroke:0.12px #1b1d1e;transform:scaleX(0.8978);transform-origin:0 0;">dans les panneaux</div>
<div id="t60" style="position:absolute;left:336.00px;top:240.90px;font-family:'Liberation Sans';font-size:6.6px;font-weight:400;color:#1b1d1e;white-space:pre;line-height:0;filter:contrast(1.001);z-index:5;-webkit-text-stroke:0.12px #1b1d1e;transform:scaleX(1.0118);transform-origin:0 0;">disponibles en bas de la</div>
<div id="t61" style="position:absolute;left:336.00px;top:247.79px;font-family:'Liberation Sans';font-size:6.6px;font-weight:400;color:#1b1d1e;white-space:pre;line-height:0;filter:contrast(1.001);z-index:5;-webkit-text-stroke:0.12px #1b1d1e;transform:scaleX(1.0056);transform-origin:0 0;">fenêtre.</div>
<div id="t62" style="position:absolute;left:357.60px;top:302.15px;font-family:'Liberation Sans';font-size:6.5px;font-weight:400;color:#232627;white-space:pre;line-height:0;filter:contrast(1.001);z-index:5;-webkit-text-stroke:0.12px #232627;transform:scaleX(1.0534);transform-origin:0 0;">Tester Algorithme</div>
<div id="t63" style="position:absolute;left:362.20px;top:323.85px;font-family:'Liberation Sans';font-size:6.5px;font-weight:400;color:#232627;white-space:pre;line-height:0;filter:contrast(1.001);z-index:5;-webkit-text-stroke:0.12px #232627;transform:scaleX(0.9950);transform-origin:0 0;">Nouvelle Ligne</div>
<div id="t64" style="position:absolute;left:82.60px;top:352.15px;font-family:'Liberation Sans';font-size:6.5px;font-weight:400;color:#232627;white-space:pre;line-height:0;filter:contrast(1.001);z-index:5;-webkit-text-stroke:0.12px #232627;transform:scaleX(1.0345);transform-origin:0 0;">Opérations standards</div>
<div id="t65" style="position:absolute;left:153.30px;top:352.15px;font-family:'Liberation Sans';font-size:6.5px;font-weight:400;color:#232627;white-space:pre;line-height:0;filter:contrast(1.001);z-index:5;-webkit-text-stroke:0.12px #232627;transform:scaleX(1.0434);transform-origin:0 0;">Utiliser une fonction numérique</div>
<div id="t66" style="position:absolute;left:254.60px;top:352.15px;font-family:'Liberation Sans';font-size:6.5px;font-weight:400;color:#232627;white-space:pre;line-height:0;filter:contrast(1.001);z-index:5;-webkit-text-stroke:0.12px #232627;transform:scaleX(1.0212);transform-origin:0 0;">Dessiner dans un repère</div>
<div id="t67" style="position:absolute;left:334.90px;top:352.15px;font-family:'Liberation Sans';font-size:6.5px;font-weight:400;color:#232627;white-space:pre;line-height:0;filter:contrast(1.001);z-index:5;-webkit-text-stroke:0.12px #232627;">Fonctions locales</div>
<div id="t68" style="position:absolute;left:97.80px;top:369.50px;font-family:'Liberation Sans';font-size:6.5px;font-weight:400;color:#232627;white-space:pre;line-height:0;filter:contrast(1.001);z-index:5;-webkit-text-stroke:0.12px #232627;transform:scaleX(1.0338);transform-origin:0 0;">Déclarer nouvelle variable</div>
<div id="t69" style="position:absolute;left:106.30px;top:387.70px;font-family:'Liberation Sans';font-size:6.5px;font-weight:400;color:#a3a5a7;white-space:pre;line-height:0;filter:contrast(1.001);z-index:5;-webkit-text-stroke:0.12px #a3a5a7;">Ajouter LIRE variable</div>
<div id="t70" style="position:absolute;left:96.30px;top:405.95px;font-family:'Liberation Sans';font-size:6.5px;font-weight:400;color:#a3a5a7;white-space:pre;line-height:0;filter:contrast(1.001);z-index:5;-webkit-text-stroke:0.12px #a3a5a7;transform:scaleX(0.9784);transform-origin:0 0;">AFFECTER valeur à variable</div>
<div id="t71" style="position:absolute;left:202.00px;top:369.50px;font-family:'Liberation Sans';font-size:6.5px;font-weight:400;color:#a3a5a7;white-space:pre;line-height:0;filter:contrast(1.001);z-index:5;-webkit-text-stroke:0.12px #a3a5a7;transform:scaleX(0.9684);transform-origin:0 0;">Ajouter AFFICHER Variable</div>
<div id="t72" style="position:absolute;left:201.20px;top:387.70px;font-family:'Liberation Sans';font-size:6.5px;font-weight:400;color:#a3a5a7;white-space:pre;line-height:0;filter:contrast(1.001);z-index:5;-webkit-text-stroke:0.12px #a3a5a7;transform:scaleX(0.9537);transform-origin:0 0;">Ajouter AFFICHER Message</div>
<div id="t73" style="position:absolute;left:205.50px;top:405.95px;font-family:'Liberation Sans';font-size:6.5px;font-weight:400;color:#a3a5a7;white-space:pre;line-height:0;filter:contrast(1.001);z-index:5;-webkit-text-stroke:0.12px #a3a5a7;transform:scaleX(0.9500);transform-origin:0 0;">Ajouter AFFICHER Calcul</div>
<div id="t74" style="position:absolute;left:309.30px;top:369.50px;font-family:'Liberation Sans';font-size:6.5px;font-weight:400;color:#a3a5a7;white-space:pre;line-height:0;filter:contrast(1.001);z-index:5;-webkit-text-stroke:0.12px #a3a5a7;transform:scaleX(0.9554);transform-origin:0 0;">Ajouter SI...ALORS</div>
<div id="t75" style="position:absolute;left:304.30px;top:387.70px;font-family:'Liberation Sans';font-size:6.5px;font-weight:400;color:#a3a5a7;white-space:pre;line-height:0;filter:contrast(1.001);z-index:5;-webkit-text-stroke:0.12px #a3a5a7;transform:scaleX(0.9711);transform-origin:0 0;">Ajouter POUR...DE...A</div>
<div id="t76" style="position:absolute;left:306.50px;top:405.95px;font-family:'Liberation Sans';font-size:6.5px;font-weight:400;color:#a3a5a7;white-space:pre;line-height:0;filter:contrast(1.001);z-index:5;-webkit-text-stroke:0.12px #a3a5a7;transform:scaleX(0.9722);transform-origin:0 0;">Ajouter TANT QUE...</div>
<div id="t77" style="position:absolute;left:394.30px;top:368.95px;font-family:'Liberation Sans';font-size:6.5px;font-weight:400;color:#a3a5a7;white-space:pre;line-height:0;filter:contrast(1.001);z-index:5;font-style:italic;-webkit-text-stroke:0.12px #a3a5a7;transform:scaleX(0.9763);transform-origin:0 0;">Pause</div>
<div id="t78" style="position:absolute;left:382.70px;top:386.35px;font-family:'Liberation Sans';font-size:6.5px;font-weight:400;color:#a3a5a7;white-space:pre;line-height:0;filter:contrast(1.001);z-index:5;font-style:italic;-webkit-text-stroke:0.12px #a3a5a7;transform:scaleX(1.0586);transform-origin:0 0;">Commentaire</div>
<div id="t79" style="position:absolute;left:534.40px;top:7.15px;font-family:'Liberation Sans';font-size:6.5px;font-weight:400;color:#eceff1;white-space:pre;line-height:0;filter:contrast(1.001);z-index:12;-webkit-text-stroke:0.12px #eceff1;">AlgoBox Test</div>
<div id="t80" style="position:absolute;left:476.20px;top:26.90px;font-family:'Liberation Sans';font-size:7.5px;font-weight:700;color:#ffffff;white-space:pre;line-height:0;filter:contrast(1.001);z-index:13;transform:scaleX(1.0184);transform-origin:0 0;">AlgoBox : courbe_fonction_par_morceaux</div>
<div id="t81" style="position:absolute;left:438.10px;top:42.90px;font-family:'Liberation Sans';font-size:7.5px;font-weight:400;color:#000000;white-space:pre;line-height:0;filter:contrast(1.001);z-index:13;-webkit-text-stroke:0.1px #000;transform:scaleX(0.9729);transform-origin:0 0;">Courbe représentative d'une fonction définie par morceaux</div>
<div id="t82" style="position:absolute;left:461.50px;top:61.73px;font-family:'Liberation Sans';font-size:8.0px;font-weight:700;color:#ffffff;white-space:pre;line-height:0;filter:contrast(1.001);z-index:14;transform:scaleX(0.9546);transform-origin:0 0;">Graphique</div>
<div id="t83" style="position:absolute;left:501.20px;top:306.55px;font-family:'Liberation Sans';font-size:6.5px;font-weight:400;color:#232627;white-space:pre;line-height:0;filter:contrast(1.001);z-index:17;-webkit-text-stroke:0.12px #232627;transform:scaleX(0.9556);transform-origin:0 0;">Console</div>
<div id="t84" style="position:absolute;left:442.00px;top:321.91px;font-family:'Liberation Mono';font-size:6.6px;font-weight:700;color:#f6c244;white-space:pre;line-height:0;filter:contrast(1.001);z-index:18;transform:scaleX(0.9384);transform-origin:0 0;">***Algorithme lancé***</div>
<div id="t85" style="position:absolute;left:442.00px;top:335.81px;font-family:'Liberation Mono';font-size:6.6px;font-weight:700;color:#f6c244;white-space:pre;line-height:0;filter:contrast(1.001);z-index:18;transform:scaleX(0.9385);transform-origin:0 0;">***Algorithme terminé***</div>
<div id="t86" style="position:absolute;left:611.00px;top:309.10px;font-family:'Liberation Sans';font-size:6.5px;font-weight:400;color:#232627;white-space:pre;line-height:0;filter:contrast(1.001);z-index:17;-webkit-text-stroke:0.12px #232627;transform:scaleX(0.9601);transform-origin:0 0;">Lancer Algorithme</div>
<div id="t87" style="position:absolute;left:603.80px;top:326.75px;font-family:'Liberation Sans';font-size:6.5px;font-weight:400;color:#232627;white-space:pre;line-height:0;filter:contrast(1.001);z-index:17;-webkit-text-stroke:0.12px #232627;transform:scaleX(0.9510);transform-origin:0 0;">Mode pas à pas</div>
<div id="t88" style="position:absolute;left:623.00px;top:344.45px;font-family:'Liberation Sans';font-size:6.5px;font-weight:400;color:#a3a5a7;white-space:pre;line-height:0;filter:contrast(1.001);z-index:17;-webkit-text-stroke:0.12px #a3a5a7;transform:scaleX(0.9685);transform-origin:0 0;">Continuer</div>
<div id="t89" style="position:absolute;left:626.20px;top:364.10px;font-family:'Liberation Sans';font-size:6.5px;font-weight:400;color:#a3a5a7;white-space:pre;line-height:0;filter:contrast(1.001);z-index:17;-webkit-text-stroke:0.12px #a3a5a7;">Arrêter</div>
<div id="t90" style="position:absolute;left:616.20px;top:383.45px;font-family:'Liberation Sans';font-size:6.5px;font-weight:400;color:#232627;white-space:pre;line-height:0;filter:contrast(1.001);z-index:17;-webkit-text-stroke:0.12px #232627;">Imprimer (pdf)</div>
<div id="t91" style="position:absolute;left:621.90px;top:408.20px;font-family:'Liberation Sans';font-size:6.5px;font-weight:400;color:#232627;white-space:pre;line-height:0;filter:contrast(1.001);z-index:17;-webkit-text-stroke:0.12px #232627;transform:scaleX(0.9450);transform-origin:0 0;">Fermer</div>
</body></html>
